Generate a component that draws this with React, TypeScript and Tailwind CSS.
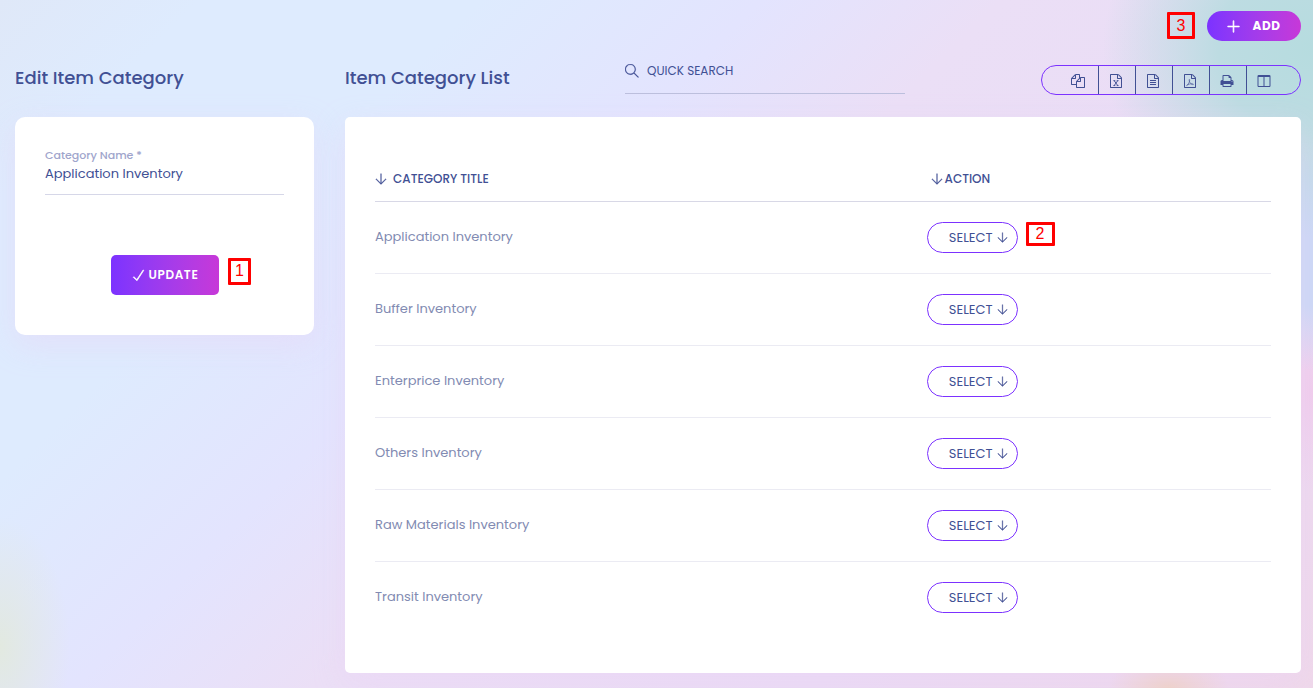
import { TfiArrowDown, TfiSearch, TfiCheck, TfiPlus } from 'react-icons/tfi';
import type { ReactNode } from 'react';

const categories = [
  'Application Inventory',
  'Buffer Inventory',
  'Enterprice Inventory',
  'Others Inventory',
  'Raw Materials Inventory',
  'Transit Inventory',
];

const sheet =
  'M1596 380q28 28 48 76t20 88v1152q0 40-28 68t-68 28h-1344q-40 0-68-28t-28-68v-1600q0-40 28-68t68-28h896q40 0 88 20t76 48zm-444-244v376h376q-10-29-22-41l-313-313q-12-12-41-22zm384 1528v-1024h-416q-40 0-68-28t-28-68v-416h-768v1536h1280z';

const tools: { label: string; body: ReactNode }[] = [
  {
    label: 'Copy',
    body: (
      <path d="M1696 384q40 0 68 28t28 68v1216q0 40-28 68t-68 28h-960q-40 0-68-28t-28-68v-288h-544q-40 0-68-28t-28-68v-672q0-40 20-88t48-76l408-408q28-28 76-48t88-20h416q40 0 68 28t28 68v328q68-40 128-40h416zm-544 213l-299 299h299v-299zm-640-384l-299 299h299v-299zm196 647l316-316v-416h-384v416q0 40-28 68t-68 28h-416v640h512v-256q0-40 20-88t48-76zm956 804v-1152h-384v416q0 40-28 68t-68 28h-416v640h896z" />
    ),
  },
  {
    label: 'Export to Excel',
    body: (
      <>
        <path d={sheet} />
        <path
          d="M660 850L1120 1480M1120 850L660 1480M570 850H800M990 850H1210M570 1480H800M990 1480H1210"
          fill="none"
          stroke="currentColor"
          strokeWidth="120"
        />
      </>
    ),
  },
  {
    label: 'Export to CSV',
    body: (
      <path
        d={
          sheet +
          'm-1024-864q0-14 9-23t23-9h704q14 0 23 9t9 23v64q0 14-9 23t-23 9h-704q-14 0-23-9t-9-23v-64zm736 224q14 0 23 9t9 23v64q0 14-9 23t-23 9h-704q-14 0-23-9t-9-23v-64q0-14 9-23t23-9h704zm0 256q14 0 23 9t9 23v64q0 14-9 23t-23 9h-704q-14 0-23-9t-9-23v-64q0-14 9-23t23-9h704z'
        }
      />
    ),
  },
  {
    label: 'Export to PDF',
    body: (
      <>
        <path d={sheet} />
        <path
          d="M470 1490C600 1440 760 1180 820 960C870 780 860 690 820 690C770 690 780 850 850 1020C940 1220 1080 1330 1250 1360C1390 1370 1360 1260 1200 1250C980 1240 760 1290 610 1360C500 1410 450 1470 470 1490"
          fill="none"
          stroke="currentColor"
          strokeWidth="80"
        />
      </>
    ),
  },
  {
    label: 'Print',
    body: (
      <path d="M448 1536h896v-256h-896v256zm0-640h896v-384h-160q-40 0-68-28t-28-68v-160h-640v640zm1152 64q0-26-19-45t-45-19-45 19-19 45 19 45 45 19 45-19 19-45zm128 0v416q0 13-9.500 22.500t-22.500 9.500h-224v160q0 40-28 68t-68 28h-960q-40 0-68-28t-28-68v-160h-224q-13 0-22.500-9.500t-9.500-22.500v-416q0-79 56.500-135.500t135.500-56.500h64v-544q0-40 28-68t68-28h672q40 0 88 20t76 48l152 152q28 28 48 76t20 88v256h64q79 0 135.500 56.500t56.500 135.500z" />
    ),
  },
  {
    label: 'Choose columns',
    body: (
      <path d="M224 1536h608v-1152h-640v1120q0 13 9.500 22.500t22.500 9.500zm1376-32v-1120h-640v1152h608q13 0 22.500-9.500t9.500-22.500zm128-1216v1216q0 66-47 113t-113 47h-1344q-66 0-113-47t-47-113v-1216q0-66 47-113t113-47h1344q66 0 113 47t47 113z" />
    ),
  },
];

function Marker({ children, className }: { children: ReactNode; className: string }) {
  return (
    <span
      className={`flex items-center justify-center rounded-[1px] border-3 border-[#ff0000] font-['Liberation_Sans',sans-serif] text-base leading-none text-[#ff0000] ${className}`}
    >
      {children}
    </span>
  );
}

function EditPanel() {
  return (
    <section>
      <h1 className="flex h-[76px] items-center pb-[2px] text-lg font-medium">Edit Item Category</h1>
      <form
        className="rounded-[10px] bg-white px-[30px] pt-[30px] pb-10 shadow-[0_10px_30px_rgba(236,208,244,0.4)]"
        onSubmit={(e) => e.preventDefault()}
      >
        <label htmlFor="category-name" className="block text-[11px] leading-4 font-medium text-[#a0a5cc]">
          Category Name *
        </label>
        <input
          id="category-name"
          defaultValue="Application Inventory"
          className="block h-8 w-full border-b border-[#d6d7e8] bg-transparent pb-[10px] text-[13px] outline-none"
        />
        <div className="flex items-center pt-[60px] pl-[66px]">
          <button
            type="submit"
            className="flex h-10 w-[108px] shrink-0 items-center justify-center gap-1 rounded-[5px] bg-linear-to-r from-[#7c32ff] to-[#c738d8] text-xs font-semibold tracking-wider text-white"
          >
            <TfiCheck size={13} strokeWidth={1} />
            UPDATE
          </button>
          <Marker className="ml-[9px] h-[27px] w-[23px] -translate-y-1">1</Marker>
        </div>
      </form>
    </section>
  );
}

function Toolbar() {
  return (
    <div className="flex h-[30px] items-stretch rounded-full border border-[#7c32ff] pr-[17px] pl-[19px]">
      {tools.map((tool, i) => (
        <button
          key={tool.label}
          type="button"
          aria-label={tool.label}
          className={`flex w-[37px] items-center justify-center pt-px pr-[3px] ${i > 0 ? 'border-l border-[#415094]' : ''}`}
        >
          <svg viewBox="0 0 1792 1792" className="size-[14px] fill-current">
            {tool.body}
          </svg>
        </button>
      ))}
    </div>
  );
}

function CategoryTable() {
  return (
    <div className="rounded-[5px] bg-white px-[30px] py-10 shadow-[0_10px_30px_rgba(236,208,244,0.4)]">
      <table className="w-full border-separate border-spacing-0 text-left">
        <thead>
          <tr className="h-[45px] text-xs">
            <th className="w-[62%] border-b border-[#d8d8e6] font-medium">
              <span className="flex items-center gap-[6px]">
                <TfiArrowDown size={12} strokeWidth={0.5} />
                CATEGORY TITLE
              </span>
            </th>
            <th className="border-b border-[#d8d8e6] font-medium">
              <span className="flex items-center gap-[2px]">
                <TfiArrowDown size={12} strokeWidth={0.5} />
                ACTION
              </span>
            </th>
          </tr>
        </thead>
        <tbody className="text-[13px] text-[#828bb2]">
          {categories.map((name, i) => {
            const last = i === categories.length - 1;
            const line = last ? '' : 'border-b border-[#ebebf3]';
            return (
              <tr key={name} className={last ? 'h-[71px]' : 'h-[72px]'}>
                <td className={`pb-[2px] ${line}`}>{name}</td>
                <td className={line}>
                  <div className="-ml-1 flex items-center gap-2">
                    <button
                      type="button"
                      className="flex h-[31px] w-[91px] items-center justify-end gap-1 rounded-full border border-[#7c32ff] pr-[9px] text-[13px] text-[#415094]"
                    >
                      SELECT
                      <TfiArrowDown size={11} strokeWidth={0.5} />
                    </button>
                    {i === 0 && <Marker className="h-6 w-[29px] -translate-y-1">2</Marker>}
                  </div>
                </td>
              </tr>
            );
          })}
        </tbody>
      </table>
    </div>
  );
}

function ListPanel() {
  return (
    <section>
      <div className="flex h-[76px] items-start">
        <h2 className="flex h-[76px] w-[280px] shrink-0 items-center pb-[2px] text-lg font-medium">
          Item Category List
        </h2>
        <label className="mt-[15px] flex h-[38px] w-[280px] items-center gap-2 border-b border-[#bcbfdd] pb-[7px]">
          <TfiSearch size={14} strokeWidth={0.3} className="shrink-0" />
          <input
            type="search"
            aria-label="Quick search"
            placeholder="QUICK SEARCH"
            className="w-full bg-transparent pb-px text-xs outline-none placeholder:text-[#415094]"
          />
        </label>
        <div className="mt-6 ml-auto">
          <Toolbar />
        </div>
      </div>
      <CategoryTable />
    </section>
  );
}

export default function App() {
  return (
    <main className="min-h-screen bg-[radial-gradient(ellipse_60px_36px_at_89%_100%,#efd2c4_0%,#efd2c400_100%),radial-gradient(ellipse_210px_190px_at_100%_7%,#b6dcdf_0%,#bddce2_45%,#bddce200_100%),radial-gradient(ellipse_90px_130px_at_100%_35%,#cbd8f6_0%,#cbd8f6_50%,#cbd8f600_100%),radial-gradient(ellipse_60px_100px_at_100%_57%,#f0ccec_0%,#f0ccec00_100%),radial-gradient(ellipse_70px_130px_at_0%_94%,#e2e9e0_0%,#e2e9e000_100%),linear-gradient(135deg,#dfe8f8_0%,#deebfe_10%,#deebfe_24%,#e3e4fe_38%,#ebdff6_50%,#eadbf5_75%,#efd8ea_100%)] pr-3 pb-[15px] pl-[15px] font-[Poppins,Inter,sans-serif] text-[#415094]">
      <header className="flex h-[41px] items-end justify-end gap-3">
        <Marker className="mb-[2px] h-[27px] w-7">3</Marker>
        <button
          type="button"
          className="flex h-[30px] w-[94px] items-center justify-center gap-3 rounded-full bg-linear-to-r from-[#7c32ff] to-[#c738d8] text-xs font-bold tracking-wider text-white"
        >
          <TfiPlus size={13} strokeWidth={1} />
          ADD
        </button>
      </header>
      <div className="grid grid-cols-[minmax(0,299fr)_minmax(0,956fr)] items-start gap-[31px]">
        <EditPanel />
        <ListPanel />
      </div>
    </main>
  );
}
